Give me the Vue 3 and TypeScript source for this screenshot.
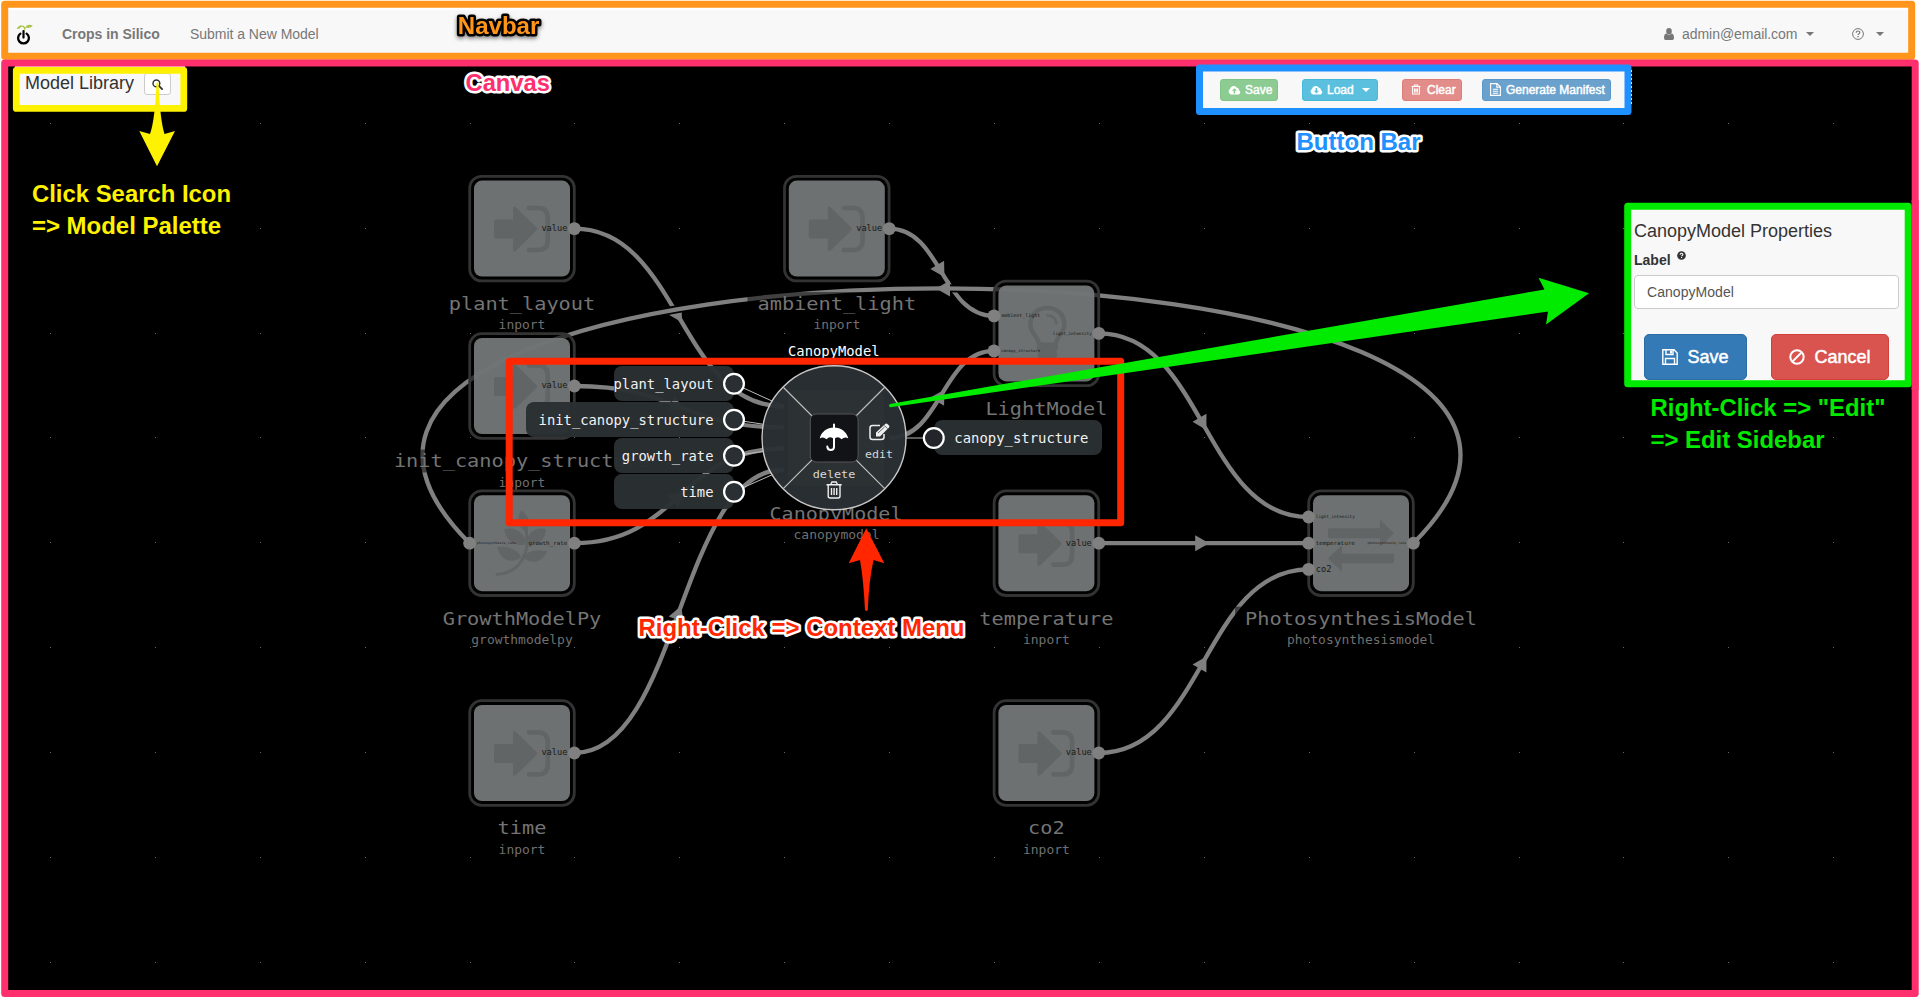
<script setup lang="ts">
type IconKind = 'inport' | 'bulb' | 'leaf' | 'exchange'
interface Port { name: string; dy: number }
interface GraphNode {
  x: number; y: number; label: string; sub: string; icon: IconKind
  inputs: Port[]; outputs: Port[]
}
interface Edge { d: string; mx: number; my: number; angle: number }

const value: Port[] = [{ name: 'value', dy: 0 }]

const nodes: GraphNode[] = [
  { x: 522, y: 228.6, label: 'plant_layout', sub: 'inport', icon: 'inport', inputs: [], outputs: value },
  { x: 836.8, y: 228.6, label: 'ambient_light', sub: 'inport', icon: 'inport', inputs: [], outputs: value },
  { x: 522, y: 386, label: 'init_canopy_structure', sub: 'inport', icon: 'inport', inputs: [], outputs: value },
  {
    x: 1046.4, y: 333.4, label: 'LightModel', sub: '', icon: 'bulb',
    inputs: [{ name: 'ambient_light', dy: -17.5 }, { name: 'canopy_structure', dy: 17.5 }],
    outputs: [{ name: 'light_intensity', dy: 0 }],
  },
  {
    x: 522, y: 543.2, label: 'GrowthModelPy', sub: 'growthmodelpy', icon: 'leaf',
    inputs: [{ name: 'photosynthesis_rate', dy: 0 }], outputs: [{ name: 'growth_rate', dy: 0 }],
  },
  { x: 1046.4, y: 543.2, label: 'temperature', sub: 'inport', icon: 'inport', inputs: [], outputs: value },
  {
    x: 1361, y: 543.2, label: 'PhotosynthesisModel', sub: 'photosynthesismodel', icon: 'exchange',
    inputs: [{ name: 'light_intensity', dy: -26.2 }, { name: 'temperature', dy: 0 }, { name: 'co2', dy: 26.2 }],
    outputs: [{ name: 'photosynthesis_rate', dy: 0 }],
  },
  { x: 522, y: 753, label: 'time', sub: 'inport', icon: 'inport', inputs: [], outputs: value },
  { x: 1046.4, y: 753, label: 'co2', sub: 'inport', icon: 'inport', inputs: [], outputs: value },
]

const forward = (sx: number, sy: number, tx: number, ty: number): Edge => {
  const mx = (sx + tx) / 2
  const my = (sy + ty) / 2
  const angle = (Math.atan2(1.5 * (ty - sy), 0.75 * (tx - sx)) * 180) / Math.PI
  return { d: `M${sx},${sy} C${mx},${sy} ${mx},${ty} ${tx},${ty}`, mx, my, angle }
}

const edges: Edge[] = [
  forward(574.3, 228.6, 784, 406.5),
  forward(574.3, 386, 784, 427.5),
  forward(574.3, 543.2, 784, 448.5),
  forward(574.3, 753, 784, 469.5),
  forward(889.2, 228.6, 994, 315.9),
  forward(889.2, 438, 994, 350.9),
  forward(1098.8, 333.4, 1308.6, 517),
  forward(1098.8, 543.2, 1308.6, 543.2),
  forward(1098.8, 753, 1308.6, 569.4),
  { d: 'M1413.4,543.2 C1753.2,203.4 129.8,203.4 469.6,543.2', mx: 941.5, my: 288.4, angle: 180 },
]

const range = (n: number): number[] => Array.from({ length: n }, (_, i) => i)
const dots = range(18).flatMap(i => range(9).map(j => ({ x: Math.floor(50.4 + 104.9 * i), y: Math.floor(123.4 + 104.85 * j) })))

const portWidth = (name: string): number => Math.min(39, name.length * 5.2)
const portFont = (name: string): number => (portWidth(name) / name.length) * 1.6

const menuInputs = [
  { name: 'plant_layout', y: 383.7, x: 614, py: 406.5 },
  { name: 'init_canopy_structure', y: 419.7, x: 526, py: 427.5 },
  { name: 'growth_rate', y: 455.7, x: 614, py: 448.5 },
  { name: 'time', y: 491.7, x: 614, py: 469.5 },
]
</script>

<template>
  <div class="page">
    <header class="navbar">
      <div class="nav-left">
        <svg class="logo" viewBox="0 0 17 21">
          <path d="M8.5,8 C8.6,4 7,2.2 5,3 C4,4.6 2,5.6 .5,4.6 C2,4 2.2,1 5,1.6 C7.4,.8 8.6,2.4 9.2,3.6 C11,0 13.5,.2 16.8,1.6 C14.5,4.4 11.6,4.4 9.8,3.6" fill="#a9c44c" />
          <path d="M4.4,9.6 a5.4,5.4 0 1 0 6.2,0" fill="none" stroke="#000" stroke-width="2.3" stroke-linecap="round" />
          <path d="M7.5,7 v6.6" stroke="#000" stroke-width="2.2" stroke-linecap="round" />
        </svg>
        <a class="brand">Crops in Silico</a>
        <a class="nav-link">Submit a New Model</a>
      </div>
      <div class="nav-right">
        <svg class="user" viewBox="0 0 10 12"><path d="M5,0 a2.8,3.2 0 0 1 0,6.4 a2.8,3.2 0 0 1 0,-6.4 M2.2,5.6 a4,4 0 0 0 5.6,0 Q10,6 10,10 Q10,12 8.4,12 H1.6 Q0,12 0,10 Q0,6 2.2,5.6z" fill="#777" /></svg>
        <a class="mail">admin@email.com</a>
        <i class="caret"></i>
        <svg class="help" viewBox="0 0 12 12">
          <circle cx="6" cy="6" r="5.4" fill="none" stroke="#777" />
          <path d="M4.2,4.7 q.1,-1.7 1.8,-1.7 q1.8,0 1.8,1.5 q0,.9 -.9,1.3 q-.8,.4 -.8,1.2" fill="none" stroke="#777" stroke-width="1.2" />
          <path d="M5.4,8h1.3v1.3h-1.3z" fill="#777" />
        </svg>
        <i class="caret"></i>
      </div>
    </header>

    <main class="workspace">
      <svg class="graph" viewBox="0 60 1919 937">
        <defs>
          <g id="icon-inport">
            <path d="M-26,-9 H-9 V-20 Q-9,-23.5 -6,-21 L14.5,-1 Q16,.5 14.5,2 L-6,22 Q-9,24 -9,21 V10 H-26 Q-28,10 -28,8 V-7 Q-28,-9 -26,-9z" fill="#616565" />
            <path d="M7,-20.6 H16 Q25.7,-20.6 25.7,-11 V12 Q25.7,21.4 16,21.4 H7" fill="none" stroke="#616565" stroke-width="4.6" stroke-linecap="round" />
          </g>
          <g id="icon-bulb">
            <path d="M-7,14 C-7,2 -16,1 -16,-9 C-16,-31 18,-31 18,-9 C18,1 9,2 9,14z" fill="none" stroke="#616565" stroke-width="4.4" />
            <path d="M1,-18 q8,0 9,8" fill="none" stroke="#616565" stroke-width="2.4" stroke-linecap="round" />
            <path d="M-8,9 H10 Q12,9 11,13 Q12,16 10,18 Q12,22 9,25 Q5,30 1,30 Q-3,30 -7,25 Q-10,22 -8,18 Q-10,16 -9,13 Q-10,9 -8,9z" fill="#616565" />
          </g>
          <g id="icon-leaf">
            <path d="M-25,31 C-8,31 3,18 5,2 L4,-24" fill="none" stroke="#616565" stroke-width="3" stroke-linecap="round" />
            <g fill="#616565">
              <path d="M-1,-33 C10,-25 8,-17 3,-12 C-5,-18 -5,-24 -1,-33z" />
              <path d="M-18,-14 C-5,-17 3,-9 4,1 C-8,4 -16,-3 -18,-14z" />
              <path d="M24,-14 C12,-17 5,-9 4,1 C16,4 23,-3 24,-14z" />
              <path d="M-25,4 C-12,2 -3,8 -1,14 C-12,22 -21,16 -25,4z" />
              <path d="M25,8 C13,5 5,9 1,14 C10,22 21,19 25,8z" />
            </g>
          </g>
          <g id="icon-exchange" fill="#616565">
            <path d="M-31,-15 H19 V-23.5 L33,-10 L19,3.5 V-5 H-31 Q-33,-5 -33,-7 V-13 Q-33,-15 -31,-15z" />
            <path d="M33,10.500 H-19 V2 L-33,15 L-19,28.500 V20 H31 Q33,20 33,18z" />
          </g>
        </defs>

        <rect x="4" y="60" width="1911" height="934" fill="#000" />
        <rect v-for="(d, i) in dots" :key="'d' + i" :x="d.x" :y="d.y" width="1" height="1" fill="#666" />

        <g v-for="(e, i) in edges" :key="'e' + i">
          <path :d="e.d" fill="none" stroke="#000" stroke-width="8" />
          <path :d="e.d" fill="none" stroke="#808080" stroke-width="4.300" />
          <path d="M-8.500,-8 L5.500,0 L-8.500,8z" fill="#808080" :transform="`translate(${e.mx},${e.my}) rotate(${e.angle})`" />
        </g>

        <g v-for="n in nodes" :key="n.label">
          <rect :x="n.x - 52.300" :y="n.y - 52.300" width="104.600" height="104.600" rx="12" fill="#000" fill-opacity=".6" stroke="#333" stroke-width="2.800" />
          <rect :x="n.x - 48" :y="n.y - 48" width="96" height="96" rx="8" fill="#747878" fill-opacity=".94" />
          <use :href="'#icon-' + n.icon" :x="n.x" :y="n.y" />
          <g class="mono">
            <text v-for="p in n.inputs" :key="p.name" :x="n.x - 45.200" :y="n.y + p.dy + portFont(p.name) * .3" :font-size="portFont(p.name)" :textLength="portWidth(p.name)" lengthAdjust="spacingAndGlyphs" fill="#191919">{{ p.name }}</text>
            <text v-for="p in n.outputs" :key="p.name" :x="n.x + 45.400 - portWidth(p.name)" :y="n.y + p.dy + portFont(p.name) * .3" :font-size="portFont(p.name)" :textLength="portWidth(p.name)" lengthAdjust="spacingAndGlyphs" fill="#191919">{{ p.name }}</text>
          </g>
          <circle v-for="p in n.inputs" :key="'i' + p.name" :cx="n.x - 52.400" :cy="n.y + p.dy" r="6.400" fill="#808080" />
          <circle v-for="p in n.outputs" :key="'o' + p.name" :cx="n.x + 52.400" :cy="n.y + p.dy" r="6.400" fill="#808080" />
          <rect :x="n.x - n.label.length * 6.100 - 10" :y="n.y + 63.500" :width="n.label.length * 12.200 + 20" height="23" fill="#000" fill-opacity=".5" />
          <text class="mono" :x="n.x - n.label.length * 6.100" :y="n.y + 81.400" font-size="18.500" :textLength="n.label.length * 12.200" lengthAdjust="spacingAndGlyphs" fill="#747474">{{ n.label }}</text>
          <text v-if="n.sub" class="mono" :x="n.x - n.sub.length * 3.900" :y="n.y + 100.600" font-size="12" :textLength="n.sub.length * 7.800" lengthAdjust="spacingAndGlyphs" fill="#707070">{{ n.sub }}</text>
        </g>

        <text class="mono" x="769.500" y="519.700" font-size="18.500" textLength="133" lengthAdjust="spacingAndGlyphs" fill="#747474">CanopyModel</text>
        <text class="mono" x="793.500" y="539.200" font-size="12" textLength="86" lengthAdjust="spacingAndGlyphs" fill="#707070">canopymodel</text>

        <g>
          <path d="M906,438 H924" stroke="#bbb" />
          <path v-for="m in menuInputs" :key="'l' + m.name" :d="`M734,${m.y} L784,${m.py}`" stroke="#bbb" />
          <rect x="934.300" y="420" width="167.700" height="35" rx="8" fill="#2a2f33" fill-opacity=".97" />
          <circle cx="933.800" cy="438" r="9.900" fill="#22262a" stroke="#fff" stroke-width="2.200" />
          <text class="mono" x="954.300" y="442.700" font-size="13.200" textLength="134" lengthAdjust="spacingAndGlyphs" fill="#f2f2f2">canopy_structure</text>
          <g v-for="m in menuInputs" :key="m.name">
            <rect :x="m.x" :y="m.y - 17.700" :width="734 - m.x" height="35" rx="8" fill="#2a2f33" fill-opacity=".97" />
            <circle cx="734" :cy="m.y" r="9.900" fill="#2a2f33" stroke="#fff" stroke-width="2.200" />
            <text class="mono" :x="713.500 - m.name.length * 8.330" :y="m.y + 5.300" font-size="13.200" :textLength="m.name.length * 8.330" lengthAdjust="spacingAndGlyphs" fill="#f2f2f2">{{ m.name }}</text>
          </g>
          <text class="mono" x="788" y="356.200" font-size="13.200" textLength="91.600" lengthAdjust="spacingAndGlyphs" fill="#fff">CanopyModel</text>
          <circle cx="834" cy="437.800" r="72" fill="#2b3034" fill-opacity=".96" stroke="#c8c8c8" stroke-width="1.400" />
          <rect x="788" y="390" width="96" height="96" rx="8" fill="#34393d" fill-opacity=".3" />
          <path d="M783.500,387.500 L884.500,488.300 M884.500,387.500 L783.500,488.300" stroke="#bfbfbf" stroke-width="1.200" />
          <rect x="810.300" y="414" width="47.800" height="48" rx="6" fill="#121317" stroke="#555" />
          <path d="M834,427.500 C841,427.500 847,432 848.300,438.500 Q845,436 841.500,439.300 Q838,435.500 834,439 Q830,435.500 826.500,439.300 Q823,436 819.700,438.500 C821,432 827,427.500 834,427.500z" fill="#fff" />
          <path d="M834,424.500 V428 M834,437 V447 Q834,450 830.700,450 Q827.600,450 827.300,446.600" fill="none" stroke="#fff" stroke-width="2" stroke-linecap="round" />
          <path d="M880,425.500 H872.500 Q870,425.500 870,428 V437 Q870,439.500 872.500,439.500 H881.500 Q884,439.500 884,437 V434" fill="none" stroke="#eee" stroke-width="1.500" />
          <path d="M876,436.500 V432.500 L885.500,423.800 Q886.500,423 887.500,424 L889,425.600 Q889.800,426.500 889,427.500 L880,436.500z" fill="#eee" />
          <path d="M878,433 L884.500,427 M884.400,425.500 L887.600,428.600" stroke="#2b3034" stroke-width=".7" />
          <text class="mono" x="865" y="457.700" font-size="11.300" textLength="28" lengthAdjust="spacingAndGlyphs" fill="#d8d8d8">edit</text>
          <text class="mono" x="812.700" y="478" font-size="11.300" textLength="42.600" lengthAdjust="spacingAndGlyphs" fill="#d8d8d8">delete</text>
          <path d="M826.500,484.700 H841.700 M830.700,484.500 L832,482 H836.200 L837.500,484.500 M828.200,485 V496 Q828.200,498 830.200,498 H838 Q840,498 840,496 V485 M831.500,488 V495 M834.100,488 V495 M836.700,488 V495" fill="none" stroke="#eee" stroke-width="1.400" />
        </g>
      </svg>

      <section class="library">
        <span class="library-title">Model Library</span>
        <button class="search">
          <svg viewBox="0 0 12 12"><circle cx="4.800" cy="4.800" r="3.700" fill="none" stroke="#333" stroke-width="1.600" /><path d="M7.600,7.600 L11,11" stroke="#333" stroke-width="2" stroke-linecap="round" /></svg>
        </button>
      </section>

      <section class="toolbar">
        <button class="tool save"><svg viewBox="0 0 13 10"><path d="M3,9.500 A3,3 0 0 1 2,4 A3.800,3.800 0 0 1 9,2.800 A2.300,2.300 0 0 1 11,5.200 A2.300,2.300 0 0 1 10.500,9.500z" fill="#fff" /><path d="M6.400,8.500 V5" stroke="#8ccb92" stroke-width="1.600" /><path d="M3.800,5.800 L6.400,3.200 L9,5.800z" fill="#8ccb92" /></svg><span>Save</span></button>
        <button class="tool load"><svg viewBox="0 0 13 10"><path d="M3,9.500 A3,3 0 0 1 2,4 A3.800,3.800 0 0 1 9,2.800 A2.300,2.300 0 0 1 11,5.200 A2.300,2.300 0 0 1 10.500,9.500z" fill="#fff" /><path d="M6.400,3 V6.500" stroke="#5bc0de" stroke-width="1.600" /><path d="M3.800,5.800 L6.400,8.400 L9,5.800z" fill="#5bc0de" /></svg><span>Load</span><i class="caret light"></i></button>
        <button class="tool clear"><svg class="narrow" viewBox="0 0 10 11"><path d="M.5,2.500 H9.500 M3,2.300 L3.600,1 H6.400 L7,2.300 M1.600,3 V10 H8.400 V3 M3.600,4.500 V8.500 M5,4.500 V8.500 M6.400,4.500 V8.500" fill="none" stroke="#fff" stroke-width="1.100" /></svg><span>Clear</span></button>
        <button class="tool manifest"><svg class="page-icon" viewBox="0 0 11 13"><path d="M.6,.6 H7 L10.400,4 V12.400 H.6z M6.800,.8 V4.200 H10.200 M2.800,6.200 H8.200 M2.800,8.200 H8.200 M2.800,10.200 H8.200" fill="none" stroke="#fff" stroke-width="1.100" /></svg><span>Generate Manifest</span></button>
      </section>

      <aside class="sidebar">
        <h2>CanopyModel Properties</h2>
        <label>Label <svg class="tip" viewBox="0 0 10 10"><circle cx="5" cy="5" r="4.800" fill="#333" /><path d="M3.400,4 q.1,-1.500 1.600,-1.500 q1.600,0 1.600,1.300 q0,.7 -.8,1.100 q-.7,.3 -.7,.9 M5.100,6.700 v1.200" fill="none" stroke="#fff" stroke-width="1.200" /></svg></label>
        <div class="field">CanopyModel</div>
        <div class="actions">
          <button class="big primary">
            <svg viewBox="0 0 16 16"><path d="M.8,.8 H12 L15.200,4 V15.200 H.8z M4,1 V5.500 H11 V1 M3.500,15 V9.500 H12.500 V15" fill="none" stroke="#fff" stroke-width="1.400" /><path d="M8,1.500h2v3h-2z" fill="#fff" /></svg><span>Save</span>
          </button>
          <button class="big danger">
            <svg viewBox="0 0 16 16"><circle cx="8" cy="8" r="6.700" fill="none" stroke="#fff" stroke-width="2" /><path d="M3.500,12.500 L12.500,3.500" stroke="#fff" stroke-width="2" /></svg><span>Cancel</span>
          </button>
        </div>
      </aside>
    </main>

    <svg class="notes" viewBox="0 0 1919 998">
      <g fill="none" stroke-linejoin="round">
        <rect x="4.700" y="4.200" width="1907" height="52" stroke="#ff951b" stroke-width="7" />
        <rect x="4.700" y="63" width="1910.500" height="930.500" stroke="#ff2f6d" stroke-width="7" />
        <rect x="16.300" y="70.400" width="167.500" height="38" stroke="#fff200" stroke-width="6.800" />
        <rect x="1199.500" y="68" width="428.500" height="43.500" stroke="#1e90ff" stroke-width="7" />
        <rect x="1627.700" y="206.200" width="280.500" height="177.500" stroke="#00eb00" stroke-width="7" />
        <path d="M1915.200,200 V390" stroke="#ff2f6d" stroke-width="7" />
        <rect x="509.200" y="361.200" width="611.500" height="161.500" stroke="#ff2600" stroke-width="7" />
        <path d="M1631.500,70 V106" stroke="#ddd" stroke-width="1" stroke-dasharray="2 2" />
      </g>
      <path d="M156.500,83 Q157.500,82 158.500,83 Q160,120 164.500,134 L175,131 L157,166.300 L139.300,131 L150,134 Q155,120 156.500,83z" fill="#fff200" />
      <path d="M866.300,528.300 L884.300,563.300 L873.500,560 Q869,580 867.800,610 Q866.500,612 865,610 Q863.500,580 860,560 L848.700,563.300z" fill="#ff2600" />
      <path d="M890,404 L1544.500,289.500 L1538.500,277.700 L1589,293.300 L1546,324.500 L1548,311.500 L890.500,407.300 Q888,406 890,404z" fill="#00eb00" />
      <g class="caption">
        <g class="shadow"><text x="457.800" y="34" textLength="81.500" lengthAdjust="spacingAndGlyphs" fill="#ff951b" stroke="#000">Navbar</text></g>
        <text x="465.500" y="90.700" textLength="84.500" lengthAdjust="spacingAndGlyphs" fill="#ff2f6d" stroke="#fff">Canvas</text>
        <text x="1296.500" y="149.700" textLength="124" lengthAdjust="spacingAndGlyphs" fill="#1e90ff" stroke="#fff">Button Bar</text>
        <text x="638.500" y="635.900" textLength="326" lengthAdjust="spacingAndGlyphs" fill="#ff2600" stroke="#fff">Right-Click =&gt; Context Menu</text>
        <text x="32" y="201.700" textLength="199" lengthAdjust="spacingAndGlyphs" fill="#fff200">Click Search Icon</text>
        <text x="32" y="234" textLength="189" lengthAdjust="spacingAndGlyphs" fill="#fff200">=&gt; Model Palette</text>
        <text x="1650.500" y="416" textLength="235" lengthAdjust="spacingAndGlyphs" fill="#00eb00">Right-Click =&gt; "Edit"</text>
        <text x="1650.500" y="448" textLength="174" lengthAdjust="spacingAndGlyphs" fill="#00eb00">=&gt; Edit Sidebar</text>
      </g>
    </svg>
  </div>
</template>

<style>
body { margin: 0; background: #fff; overflow: hidden; }
</style>

<style scoped>
.page { position: relative; width: 1919px; height: 998px; overflow: hidden; background: #fff; font-family: "Liberation Sans", Arial, sans-serif; color: #333; }
.page, .page * { box-sizing: border-box; }
.navbar { display: flex; justify-content: space-between; align-items: flex-start; height: 50px; margin: 10px 8px 0; padding: 0 27px 0 8px; background: #f8f8f8; font-size: 14px; line-height: 20px; color: #777; }
.nav-left, .nav-right { display: flex; align-items: center; height: 48px; }
.logo { width: 17px; height: 21px; margin-right: 29px; }
.brand { width: 98px; font-weight: bold; white-space: nowrap; margin-right: 30px; letter-spacing: -.02px; }
.nav-link { letter-spacing: -.03px; }
.user { width: 10px; height: 12px; margin-right: 8px; }
.mail { width: 116px; margin-right: 8px; white-space: nowrap; letter-spacing: -.05px; }
.caret { width: 0; height: 0; border: 4.500px solid transparent; border-top-color: #777; border-bottom: 0; }
.help { width: 12px; height: 12px; margin: 0 12px 0 38px; }
.workspace { position: relative; height: 937px; background: #fff; }
.graph, .notes { position: absolute; left: 0; top: 0; width: 1919px; }
.graph { height: 937px; }
.notes { height: 998px; pointer-events: none; }
.mono { font-family: "DejaVu Sans Mono", "Liberation Mono", monospace; }
.caption text { font: bold 24px "Liberation Sans", Arial, sans-serif; paint-order: stroke; stroke-width: 5px; stroke-linejoin: round; }
.shadow { filter: drop-shadow(0 2px 2px rgba(0, 0, 0, .5)); }
button { margin: 0; padding: 0; font-family: inherit; cursor: pointer; }
.library { position: absolute; left: 15px; top: 6px; width: 170px; height: 42px; display: flex; align-items: flex-start; padding: 7px 0 0 10px; background: #f8f8f8; }
.library-title { width: 119px; font-size: 18px; line-height: 20px; white-space: nowrap; }
.search { width: 27px; height: 22px; display: flex; align-items: center; justify-content: center; border: 1px solid #ccc; border-radius: 3px; background: #fff; }
.search svg { width: 11px; height: 11px; }
.toolbar { position: absolute; left: 1200px; top: 9px; width: 427px; height: 41px; display: flex; align-items: center; padding-left: 20px; background: #f8f8f8; }
.tool { height: 22px; display: flex; align-items: center; padding-left: 7px; border: 1px solid; border-radius: 3px; color: #fff; font-size: 12px; line-height: 18px; white-space: nowrap; -webkit-text-stroke: .45px #fff; }
.tool svg { width: 13px; height: 10px; margin-right: 4px; }
.tool svg.narrow { width: 10px; height: 11px; margin: 0 6px 0 1px; }
.tool svg.page-icon { width: 11px; height: 13px; margin-right: 5px; }
.tool .caret { margin-left: 8px; border-width: 4px 4px 0; }
.caret.light { border-top-color: #fff; }
.save { width: 58px; margin-right: 24px; background: #8ccb92; border-color: #80c486; }
.load { width: 76px; margin-right: 24px; background: #5bc0de; border-color: #46b8da; }
.clear { width: 60px; margin-right: 20px; background: #e38d8b; border-color: #dd7e7b; }
.manifest { width: 129px; background: #6ba2cd; border-color: #5c98c7; }
.sidebar { position: absolute; left: 1629px; top: 147px; width: 278px; height: 175px; padding: 12px 8px 0 5px; background: #f8f8f8; }
.sidebar h2 { margin: 0; font-size: 18px; font-weight: normal; line-height: 24px; }
.sidebar label { display: flex; align-items: flex-start; height: 31px; padding-top: 7px; font-size: 14px; font-weight: bold; line-height: 20px; }
.tip { width: 9px; height: 9px; margin: 1px 0 0 6px; }
.field { height: 34px; margin-top: 1px; padding-left: 12px; border: 1px solid #ccc; border-radius: 4px; background: #fff; color: #555; font-size: 14px; line-height: 33px; letter-spacing: .05px; }
.actions { display: flex; gap: 24px; padding: 25px 0 0 10px; }
.big { height: 46px; display: flex; align-items: center; justify-content: center; gap: 9px; border: 1px solid; border-radius: 5px; color: #fff; font-size: 18px; -webkit-text-stroke: .5px #fff; }
.big svg { width: 16px; height: 16px; }
.primary { width: 103px; background: #337ab7; border-color: #2e6da4; }
.danger { width: 118px; background: #d9534f; border-color: #d43f3a; }
</style>
